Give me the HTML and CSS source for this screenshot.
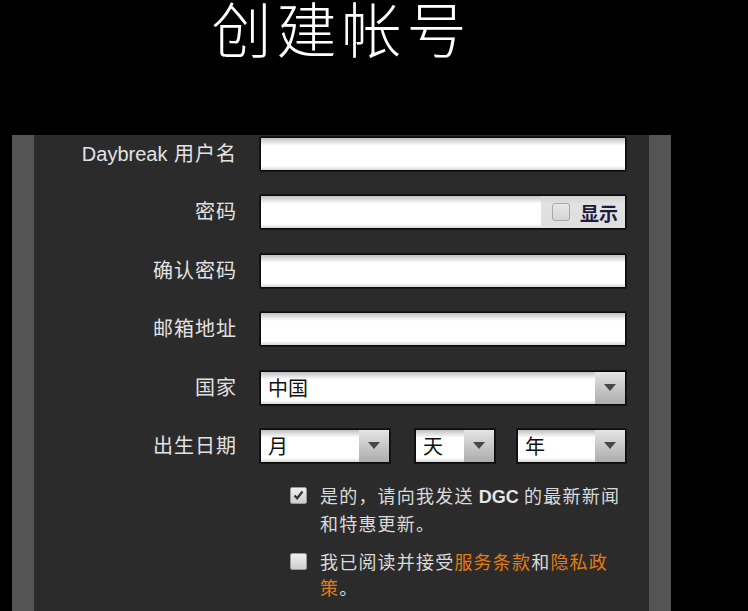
FILE: index.html
```html
<!DOCTYPE html>
<html>
<head>
    <meta charset="UTF-8">
    <title>创建帐号</title>
    <link rel="stylesheet" href="styles.css">
</head>
<body>
<div class="page">
    <h1 class="title">创建帐号</h1>
    <div class="panel">
        <form class="form">
            <label class="label"><span class="en">Daybreak</span> 用户名</label>
            <input class="field" type="text" name="username">

            <label class="label">密码</label>
            <div class="field pass">
                <input class="pass_input" type="password" name="password">
                <span class="show"><span class="box"></span>显示</span>
            </div>

            <label class="label">确认密码</label>
            <input class="field" type="password" name="password2">

            <label class="label">邮箱地址</label>
            <input class="field" type="text" name="email">

            <label class="label">国家</label>
            <div class="select"><span class="val">中国</span><span class="arrow"></span></div>

            <label class="label">出生日期</label>
            <div class="dates">
                <div class="select month"><span class="val">月</span><span class="arrow"></span></div>
                <div class="select day"><span class="val">天</span><span class="arrow"></span></div>
                <div class="select year"><span class="val">年</span><span class="arrow"></span></div>
            </div>
        </form>

        <div class="checks">
            <div class="check">
                <span class="cb on">
                    <svg width="11" height="10" viewBox="0 0 11 10"><path d="M1.5 5.5 L4.2 8.3 L9.5 1.5" fill="none" stroke="#333" stroke-width="2.2"/></svg>
                </span>
                <p class="check_text">是的，请向我发送 <span class="en">DGC</span> 的最新新闻和特惠更新。</p>
            </div>
            <div class="check">
                <span class="cb"></span>
                <p class="check_text">我已阅读并接受<a class="link">服务条款</a>和<a class="link">隐私政策</a>。</p>
            </div>
        </div>
    </div>
</div>
</body>
</html>
```

FILE: styles.css
```css
body{
    margin: 0;
    background: #000;
    font-family: "Liberation Sans", "Noto Sans CJK SC", sans-serif;
    overflow: hidden;
}
.page{
    width: 659px;
    margin-left: 12px;
}
.title{
    margin: 0;
    height: 135px;
    text-align: center;
    color: #fff;
    font-family: "Noto Sans CJK SC", sans-serif;
    font-weight: 300;
    font-size: 60px;
    letter-spacing: 5px;
    line-height: 54px;
}
.panel{
    height: 476px;
    box-sizing: border-box;
    background: #2b2b2b;
    border-left: 22px solid #545454;
    border-right: 22px solid #545454;
    padding-top: 2px;
}
.form{
    display: grid;
    grid-template-columns: 203px 366px;
    column-gap: 23px;
    row-gap: 24.4px;
    align-items: center;
}
.label{
    text-align: right;
    color: #e2e2e2;
    font-size: 20px;
    letter-spacing: 1px;
    line-height: 34px;
}
.label .en{ letter-spacing: 0; }
.field{
    display: block;
    width: 366px;
    height: 34px;
    box-sizing: border-box;
    margin: 0;
    padding: 0 8px;
    border: 1px solid #0c0c0c;
    border-radius: 1px;
    outline: none;
    background: linear-gradient(#c0c0c0, #fff 24%, #fff 88%, #d6d6d6);
    box-shadow: 0 0 0 1px rgba(0,0,0,0.5);
    font-size: 18px;
}
.pass{
    display: flex;
    padding: 0;
}
.pass_input{
    flex: 1;
    min-width: 0;
    border: none;
    outline: none;
    background: transparent;
    padding: 0 8px;
}
.show{
    width: 84px;
    display: flex;
    align-items: center;
    padding-left: 11px;
    box-sizing: border-box;
    background: linear-gradient(#d2d2d2, #e2e2e2 25%, #dedede);
    color: #1c1c3e;
    font-family: "Noto Sans CJK SC", sans-serif;
    font-weight: bold;
    font-size: 19px;
}
.show .box{
    width: 16px;
    height: 16px;
    margin-right: 10px;
    border: 1px solid #a8a8a8;
    border-radius: 3px;
    background: linear-gradient(#e8e8e8, #d4d4d4);
}
.select{
    display: flex;
    height: 34px;
    box-sizing: border-box;
    border: 1px solid #0c0c0c;
    box-shadow: 0 0 0 1px rgba(0,0,0,0.5);
    background: linear-gradient(#c0c0c0, #fff 24%, #fff 88%, #d6d6d6);
}
.select .val{
    flex: 1;
    padding-left: 7px;
    color: #111;
    font-family: "Noto Sans CJK SC", sans-serif;
    font-size: 20px;
    line-height: 32px;
}
.select .arrow{
    width: 30px;
    display: flex;
    align-items: center;
    justify-content: center;
    background: linear-gradient(#e4e4e4, #c2c2c2 60%, #adadad);
}
.select .arrow::after{
    content: "";
    border-left: 6.5px solid transparent;
    border-right: 6.5px solid transparent;
    border-top: 7px solid #474747;
}
.dates{
    display: flex;
}
.month{ width: 130px; margin-right: 25px; }
.day{ width: 80px; margin-right: 22px; }
.year{ width: 109px; }
.checks{
    margin: 19px 0 0 256px;
}
.check{
    display: flex;
    align-items: flex-start;
    margin-bottom: 12px;
}
.cb{
    flex: none;
    width: 17px;
    height: 17px;
    box-sizing: border-box;
    margin-top: 5px;
    margin-right: 13px;
    border: 1px solid #9a9a9a;
    border-radius: 2px;
    background: linear-gradient(#f0f0f0, #cdcdcd);
    display: flex;
    align-items: center;
    justify-content: center;
}
.check_text{
    margin: 0;
    width: 302px;
    color: #dadada;
    font-family: "Noto Sans CJK SC", sans-serif;
    font-size: 18px;
    letter-spacing: 1.2px;
    line-height: 26px;
}
.check_text .en{
    font-family: "Liberation Sans", sans-serif;
    font-weight: bold;
    letter-spacing: 0;
    color: #e6e6e6;
}
.link{
    color: #e27b12;
    cursor: pointer;
}
```
